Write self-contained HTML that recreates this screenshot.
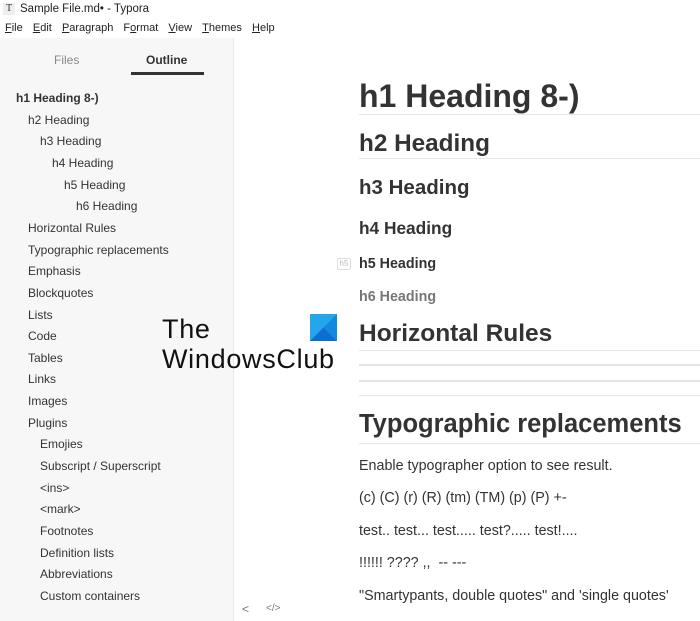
<!DOCTYPE html>
<html><head><meta charset="utf-8"><style>
*{margin:0;padding:0;box-sizing:border-box}
body{width:700px;height:621px;overflow:hidden;background:#fff;font-family:"Liberation Sans","DejaVu Sans",sans-serif;color:#333;position:relative}
.a{position:absolute;white-space:nowrap}
#side{position:absolute;left:0;top:38px;width:234px;height:583px;background:#f7f7f7;border-right:1px solid #e8e8e8}
.o{position:absolute;font-size:12px;color:#333;white-space:nowrap}
.h{position:absolute;left:359px;font-weight:bold;color:#333;white-space:nowrap}
.ln{position:absolute;left:359px;right:0;height:1px;background:#e6e6e6}
.hr{position:absolute;left:359px;right:0;height:2px;background:#e4e4e4}
.p{position:absolute;left:359px;font-size:14.3px;color:#333;white-space:nowrap}
u{text-decoration:underline}
</style></head><body>
<div class="a" style="left:3px;top:3px;width:12px;height:12px;background:#eee;font-size:10px;line-height:12px;text-align:center;font-family:'Liberation Serif',serif">T</div>
<div class="a" style="left:20px;top:3px;font-size:11.5px;color:#222">Sample File.md• - Typora</div>
<div class="a" style="left:5px;top:22px;font-size:11px;color:#222;word-spacing:2px"><u>F</u>ile &nbsp;<u>E</u>dit &nbsp;<u>P</u>aragraph &nbsp;F<u>o</u>rmat &nbsp;<u>V</u>iew &nbsp;<u>T</u>hemes &nbsp;<u>H</u>elp</div>
<div id="side"></div>
<div class="a" style="left:54px;top:53px;font-size:12px;color:#888">Files</div>
<div class="a" style="left:146px;top:53px;font-size:12px;font-weight:bold;color:#333">Outline</div>
<div class="a" style="left:131px;top:72px;width:73px;height:3px;background:#333"></div>
<div class="o" style="left:16px;top:91px;font-weight:bold">h1 Heading 8-)</div>
<div class="o" style="left:28px;top:113px">h2 Heading</div>
<div class="o" style="left:40px;top:134px">h3 Heading</div>
<div class="o" style="left:52px;top:156px">h4 Heading</div>
<div class="o" style="left:64px;top:178px">h5 Heading</div>
<div class="o" style="left:76px;top:199px">h6 Heading</div>
<div class="o" style="left:28px;top:221px">Horizontal Rules</div>
<div class="o" style="left:28px;top:243px">Typographic replacements</div>
<div class="o" style="left:28px;top:264px">Emphasis</div>
<div class="o" style="left:28px;top:286px">Blockquotes</div>
<div class="o" style="left:28px;top:308px">Lists</div>
<div class="o" style="left:28px;top:329px">Code</div>
<div class="o" style="left:28px;top:351px">Tables</div>
<div class="o" style="left:28px;top:372px">Links</div>
<div class="o" style="left:28px;top:394px">Images</div>
<div class="o" style="left:28px;top:416px">Plugins</div>
<div class="o" style="left:40px;top:437px">Emojies</div>
<div class="o" style="left:40px;top:459px">Subscript / Superscript</div>
<div class="o" style="left:40px;top:481px">&lt;ins&gt;</div>
<div class="o" style="left:40px;top:502px">&lt;mark&gt;</div>
<div class="o" style="left:40px;top:524px">Footnotes</div>
<div class="o" style="left:40px;top:546px">Definition lists</div>
<div class="o" style="left:40px;top:567px">Abbreviations</div>
<div class="o" style="left:40px;top:589px">Custom containers</div>
<div class="a" style="left:242px;top:602px;font-size:12px;color:#777">&lt;</div>
<div class="a" style="left:266px;top:603px;font-size:10px;color:#777">&lt;/&gt;</div>
<div class="h" style="top:78px;font-size:32px">h1 Heading 8-)</div>
<div class="ln" style="top:114px"></div>
<div class="h" style="top:130px;font-size:24.3px">h2 Heading</div>
<div class="ln" style="top:158px"></div>
<div class="h" style="top:176px;font-size:20.5px">h3 Heading</div>
<div class="h" style="top:218px;font-size:17.3px">h4 Heading</div>
<div class="a" style="left:337px;top:258px;width:14px;height:12px;border:1px solid #ddd;border-radius:2px;font-size:8px;color:#bbb;text-align:center;line-height:10px">h5</div>
<div class="h" style="top:256px;font-size:14.3px">h5 Heading</div>
<div class="h" style="top:289px;font-size:14.3px;color:#777">h6 Heading</div>
<div class="h" style="top:320px;font-size:24.5px">Horizontal Rules</div>
<div class="ln" style="top:350px"></div>
<div class="hr" style="top:364px"></div>
<div class="hr" style="top:380px"></div>
<div class="ln" style="top:395px"></div>
<div class="h" style="top:410px;font-size:25.5px">Typographic replacements</div>
<div class="ln" style="top:443px"></div>
<div class="p" style="top:458px">Enable typographer option to see result.</div>
<div class="p" style="top:490px">(c) (C) (r) (R) (tm) (TM) (p) (P) +-</div>
<div class="p" style="top:523px">test.. test... test..... test?..... test!....</div>
<div class="p" style="top:555px">!!!!!! ???? ,, &nbsp;-- ---</div>
<div class="p" style="top:588px">"Smartypants, double quotes" and 'single quotes'</div>
<div class="a" style="left:162px;top:314px;font-size:27px;color:#111;line-height:30px;letter-spacing:0.7px">The<br>WindowsClub</div>
<svg class="a" style="left:310px;top:314px" width="27" height="27" viewBox="0 0 28 28"><rect width="28" height="28" fill="#25a6ea"/><polygon points="0,28 14,14 28,28" fill="#0a6fd0"/><polygon points="28,0 14,14 28,28" fill="#1189de"/></svg>
</body></html>
